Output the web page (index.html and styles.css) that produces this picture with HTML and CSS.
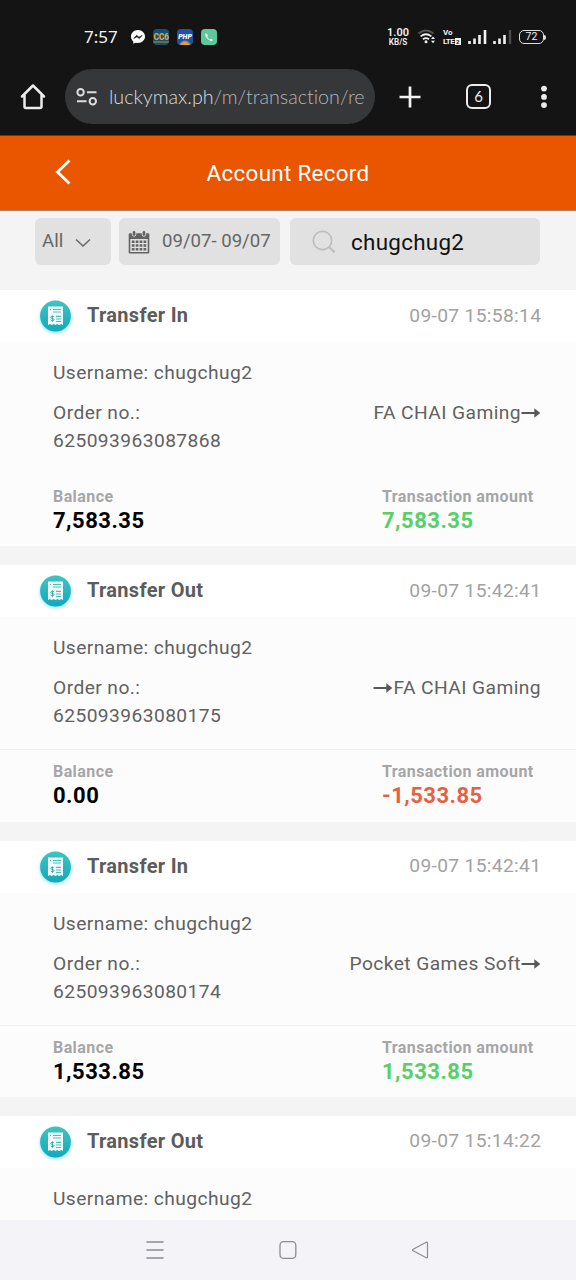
FILE: index.html
```html
<!DOCTYPE html>
<html lang="en">
<head>
<meta charset="utf-8">
<title>Account Record</title>
<link rel="stylesheet" href="styles.css">
</head>
<body>
<svg class="defs" width="0" height="0" aria-hidden="true">
  <defs>
    <linearGradient id="teal" x1="0" y1="0" x2="0" y2="1">
      <stop offset="0" stop-color="#3fc4c0"/><stop offset="1" stop-color="#10a9bd"/>
    </linearGradient>
    <radialGradient id="glow">
      <stop offset=".75" stop-color="#7fe0e6" stop-opacity=".7"/><stop offset="1" stop-color="#aeeef0" stop-opacity="0"/>
    </radialGradient>
    <symbol id="receipt" viewBox="0 0 40 40">
      <circle cx="20" cy="21.500" r="18.500" fill="url(#glow)"/>
      <circle cx="20" cy="20" r="15.400" fill="url(#teal)"/>
      <path d="M12.500 10.500h15v18.600l-1.900-1-1.900 1-1.900-1-1.800 1-1.900-1-1.900 1-1.800-1-1.900 1z" fill="#effcfb"/>
      <path d="M17.500 13.500h8M17.500 16h8M20.500 20.300h5M20.500 23h5M20.500 25.500h5M14.500 13.500h1" stroke="#4bbdc0" stroke-width="1.200"/>
      <path d="M18.400 20.900c-.6-.9-3.100-.8-3.100.5 0 1.500 3.200.8 3.200 2.300 0 1.300-2.600 1.300-3.300.2M16.900 19.300v6.500" fill="none" stroke="#3aa9ad" stroke-width="1"/>
    </symbol>
    <symbol id="arrow" viewBox="0 0 20 12">
      <path d="M.5 6h15" stroke="#585858" stroke-width="2" fill="none"/>
      <path d="M13.300 1.200 19.300 6l-6 4.800z" fill="#585858"/>
    </symbol>
  </defs>
</svg>
<div class="screen">
  <header class="status">
    <span class="clock">7:57</span>
    <svg class="messenger" width="16" height="16" viewBox="0 0 16 16"><path d="M8 1C3.900 1 1 3.900 1 7.600c0 2 .9 3.700 2.300 4.900v2.300l2.200-1.100c.8.2 1.600.3 2.500.3 4.100 0 7-2.800 7-6.400S12.100 1 8 1z" fill="#fff"/><path d="m3.800 9.500 2.800-3.200 2.400 1.900 3.200-1.900-2.900 3.300-2.300-1.800z" fill="#151515" stroke="#151515" stroke-width=".6"/></svg>
    <span class="app cc">CC6</span>
    <span class="app php">PHP</span>
    <span class="app phone"><svg width="16" height="16" viewBox="0 0 16 16"><path d="M5 4.200c-1.700 1.300.2 4.200 1.700 5.600s4.100 3.100 5.200 1.300l-2-1.500-1.100.9c-1-.5-2.400-1.900-2.700-2.900l.8-1.100z" fill="#fff"/></svg></span>
    <span class="spacer"></span>
    <span class="speed"><b>1.00</b><b class="unit">KB/S</b></span>
    <svg class="wifi" width="20" height="16" viewBox="0 0 20 16" fill="none"><path d="M1.500 4.500Q9 -1.500 16.500 4.500" stroke="#555" stroke-width="1.700"/><path d="M3.600 7.400Q9 3.200 14.400 7.400M6 10.300q3-2.300 6 0" stroke="#f2f2f2" stroke-width="1.800"/><circle cx="9" cy="12.700" r="1.500" fill="#f2f2f2"/><path d="m14 10 2-2.400 2 2.400zm0 1.800 2 2.400 2-2.400z" fill="#f2f2f2"/></svg>
    <span class="volte"><b>Vo</b><b class="lte">LTE<i>2</i></b></span>
    <svg class="sig1" width="19" height="16" viewBox="0 0 19 16"><path d="M1.500 15v-3M6.500 15v-5.500M11.500 15V6M17 15V1" stroke="#f2f2f2" stroke-width="2.600"/></svg>
    <svg class="sig2" width="19" height="16" viewBox="0 0 19 16"><path d="M1.500 15v-3M6.500 15v-5.500M11.500 15V6" stroke="#f2f2f2" stroke-width="2.600"/><path d="M17 15V1" stroke="#4a4a4a" stroke-width="2.400"/></svg>
    <span class="battery">72</span><span class="cap"></span>
  </header>

  <nav class="browser">
    <svg class="home" width="26" height="28" viewBox="0 0 26 28" fill="none" stroke="#ececec" stroke-width="2.500" stroke-linejoin="round" stroke-linecap="round"><path d="M2 13.500 13 2.500l11 11M4.500 12v11.500q0 1.500 1.500 1.500h14q1.500 0 1.500-1.500V12"/></svg>
    <div class="url">
      <svg width="22" height="18" viewBox="0 0 22 18" fill="none" stroke="#dedede" stroke-width="2"><circle cx="4.600" cy="4.300" r="3.200"/><path d="M11 4.300h9.500M1 13.300h9.500"/><circle cx="16.800" cy="13.300" r="3.200"/></svg>
      <span class="address">luckymax.ph<span class="path">/m/transaction/re</span></span>
    </div>
    <svg class="plus" width="22" height="22" viewBox="0 0 22 22"><path d="M11 .5v21M.5 11h21" stroke="#f2f2f2" stroke-width="2.700"/></svg>
    <span class="tabs">6</span>
    <svg class="dots" width="8" height="24" viewBox="0 0 8 24" fill="#ececec"><circle cx="4" cy="3.600" r="2.900"/><circle cx="4" cy="11.900" r="2.900"/><circle cx="4" cy="20.100" r="2.900"/></svg>
  </nav>

  <div class="titlebar">
    <svg class="back" width="18" height="28" viewBox="0 0 18 28"><path d="M15.500 2.500 3.500 14l12 11.500" fill="none" stroke="#fff" stroke-width="2.900"/></svg>
    <h1 class="title">Account Record</h1>
  </div>

  <div class="filters">
    <div class="filter all"><span>All</span><svg width="16" height="10" viewBox="0 0 16 10"><path d="m1 1.500 7 6.500 7-6.500" fill="none" stroke="#666" stroke-width="1.500"/></svg></div>
    <div class="filter date">
      <svg width="22" height="24" viewBox="0 0 22 24"><path d="M2 3.200h18q1.300 0 1.300 1.300v17.700q0 1.300-1.300 1.300H2Q.7 23.500.7 22.200V4.500Q.7 3.200 2 3.200z" fill="#636363"/><path d="M2.300 9h17.400v13H2.300z" fill="#e1e1e1"/><path d="M3.800 11.700h14.400M3.800 15.500h14.400M3.800 19.300h14.400" stroke="#636363" stroke-width="2.500" stroke-dasharray="2.700 1.200"/><rect x="4.300" y=".5" width="3.500" height="5.800" rx="1.700" fill="#636363" stroke="#e1e1e1" stroke-width=".9"/><rect x="14.200" y=".5" width="3.500" height="5.800" rx="1.700" fill="#636363" stroke="#e1e1e1" stroke-width=".9"/></svg>
      <span>09/07- 09/07</span>
    </div>
    <div class="filter search">
      <svg width="24" height="24" viewBox="0 0 24 24" fill="none" stroke="#bdbdbd"><circle cx="10.500" cy="10.500" r="9.200" stroke-width="1.700"/><path d="m17 17 5.500 5.200" stroke-width="2.200"/></svg>
      <span>chugchug2</span>
    </div>
  </div>

  <main class="records">
    <article class="card">
      <div class="head"><svg class="receipt"><use href="#receipt"/></svg><h2 class="kind">Transfer In</h2><time class="time">09-07 15:58:14</time></div>
      <div class="body">
        <p class="line">Username: chugchug2</p>
        <div class="order"><p class="line">Order no.:<br>625093963087868</p><p class="line route">FA CHAI Gaming<svg class="arrow"><use href="#arrow"/></svg></p></div>
      </div>
      <div class="foot plain"><div class="cell"><span class="label">Balance</span><span class="value">7,583.35</span></div><div class="cell amount"><span class="label">Transaction amount</span><span class="value in">7,583.35</span></div></div>
    </article>
    <article class="card">
      <div class="head"><svg class="receipt"><use href="#receipt"/></svg><h2 class="kind">Transfer Out</h2><time class="time">09-07 15:42:41</time></div>
      <div class="body">
        <p class="line">Username: chugchug2</p>
        <div class="order"><p class="line">Order no.:<br>625093963080175</p><p class="line route"><svg class="arrow"><use href="#arrow"/></svg>FA CHAI Gaming</p></div>
      </div>
      <div class="foot"><div class="cell"><span class="label">Balance</span><span class="value">0.00</span></div><div class="cell amount"><span class="label">Transaction amount</span><span class="value out">-1,533.85</span></div></div>
    </article>
    <article class="card">
      <div class="head"><svg class="receipt"><use href="#receipt"/></svg><h2 class="kind">Transfer In</h2><time class="time">09-07 15:42:41</time></div>
      <div class="body">
        <p class="line">Username: chugchug2</p>
        <div class="order"><p class="line">Order no.:<br>625093963080174</p><p class="line route">Pocket Games Soft<svg class="arrow"><use href="#arrow"/></svg></p></div>
      </div>
      <div class="foot"><div class="cell"><span class="label">Balance</span><span class="value">1,533.85</span></div><div class="cell amount"><span class="label">Transaction amount</span><span class="value in">1,533.85</span></div></div>
    </article>
    <article class="card">
      <div class="head"><svg class="receipt"><use href="#receipt"/></svg><h2 class="kind">Transfer Out</h2><time class="time">09-07 15:14:22</time></div>
      <div class="body"><p class="line">Username: chugchug2</p></div>
    </article>
  </main>

  <footer class="navkeys">
    <svg width="18" height="20" viewBox="0 0 18 20"><path d="M.5 2h17M.5 10h17M.5 18h17" stroke="#8c8b91" stroke-width="1.500"/></svg>
    <svg width="18" height="20" viewBox="0 0 18 20"><rect x="1" y="1.600" width="15.800" height="16.800" rx="3.600" fill="none" stroke="#8c8b91" stroke-width="1.300"/></svg>
    <svg width="18" height="20" viewBox="0 0 18 20"><path d="M15.200 2.200 2.200 9.200q-1.200.8 0 1.600l13 7q1.300.4 1.300-.8V3q0-1.200-1.300-.8z" fill="none" stroke="#8c8b91" stroke-width="1.200"/></svg>
  </footer>
</div>
</body>
</html>
```
FILE: styles.css
```css
* { box-sizing: border-box; }
body { margin: 0; font-family: Roboto, "Liberation Sans", sans-serif; }
h1, h2, p { margin: 0; font-weight: 400; }
svg { flex: none; display: block; }
.defs { position: absolute; }
.screen { width: 576px; height: 1280px; display: flex; flex-direction: column; overflow: hidden; background: #f4f4f4; }

.status { height: 60px; flex: none; padding: 14px 30px 0 84px; display: flex; align-items: center; background: #141414; color: #f2f2f2; }
.clock { width: 46px; font: 400 17px/44px "Noto Sans", sans-serif; padding-bottom: 1px; }
.spacer { flex: 1; }
.app { width: 16px; height: 16px; margin-left: 8px; border-radius: 4px; display: flex; justify-content: center; align-items: center; font-size: 8px; font-weight: 900; }
.cc { margin-left: 7px; background: linear-gradient(#17506f 75%, #6e6a4c 75% 88%, #17506f 88%); color: #d6a248; font-size: 8.500px; letter-spacing: -.3px; }
.php { background: radial-gradient(circle at 50% 110%, #e0a33c 0 22%, #204fa8 35%); color: #fff; font-size: 7px; font-style: italic; }
.phone { background: #5fc79c; }
.speed { width: 22px; margin-right: 8px; display: flex; flex-direction: column; align-items: center; font-size: 11px; line-height: 11px; }
.speed b { font-weight: 600; white-space: nowrap; }
.speed .unit { font-size: 8.200px; line-height: 9px; }
.wifi { margin-right: 6px; }
.volte { width: 18px; margin-right: 7px; display: flex; flex-direction: column; font-size: 8px; line-height: 9px; }
.volte b { white-space: nowrap; font-weight: 700; }
.lte { display: flex; align-items: center; letter-spacing: -.6px; }
.volte i { margin-left: 1px; padding: 0 1px; background: #f2f2f2; color: #141414; font-style: normal; font-size: 6px; line-height: 7px; letter-spacing: 0; }
.sig1 { margin-right: 6px; }
.sig2 { margin-right: 7px; }
.battery { width: 25px; height: 14px; border: 1.500px solid #ddd; border-radius: 5px; font-size: 10.500px; line-height: 12px; text-align: center; }
.cap { width: 2px; height: 5px; background: #ddd; border-radius: 0 2px 2px 0; }

.browser { height: 76px; flex: none; padding: 0 28px 2px 20px; display: flex; align-items: center; background: #141414; border-bottom: 1px solid #5b3a22; }
.home { margin-top: 1px; }
.url { width: 310px; height: 55px; margin-left: 19px; padding: 0 10px 0 11px; border-radius: 28px; display: flex; align-items: center; background: #353739; overflow: hidden; }
.address { margin-left: 11px; font: 300 19.700px/30px Lato, sans-serif; font-variant-ligatures: none; color: #dcdcdc; white-space: nowrap; padding-top: 1px; }
.path { color: #b3b5b6; }
.plus { margin-left: 24px; }
.tabs { width: 25px; height: 25px; margin-left: 45px; border: 2.500px solid #ececec; border-radius: 6px; color: #ececec; font: 15px/21px Lato, sans-serif; text-align: center; }
.dots { margin-left: 49px; }

.titlebar { height: 75px; flex: none; padding: 0 56px 2px 54px; display: flex; align-items: center; background: #ea5500; border-bottom: 1px solid #a87e6c; }
.title { flex: 1; margin-right: 16px; padding-top: 1px; font-size: 22.400px; letter-spacing: .3px; text-align: center; color: #fff; }

.filters { height: 79px; flex: none; padding: 7px 36px 25px 35px; display: flex; }
.filter { height: 47px; border-radius: 6px; background: #e1e1e1; display: flex; align-items: center; font-size: 18.600px; color: #666; white-space: nowrap; }
.filter span { padding-bottom: 1px; }
.all { width: 76px; padding-left: 7px; gap: 12px; }
.all svg { margin-top: 3px; }
.date { width: 161px; margin-left: 8px; padding-left: 9px; gap: 12px; }
.search { flex: 1; margin-left: 10px; padding-left: 22px; gap: 15px; font-size: 22.400px; letter-spacing: .3px; color: #111; }
.search span { padding: 0; }

.records { flex: 1; min-height: 0; overflow: hidden; }
.card { height: 256.300px; margin-bottom: 19px; background: #fcfcfc; }
.head { height: 52px; padding: 6px 35px 6px 35px; display: flex; align-items: center; background: #fff; }
.receipt { width: 41px; height: 40px; }
.kind { margin-left: 11px; flex: 1; font-size: 20px; letter-spacing: .3px; font-weight: 700; color: #5c5c5c; line-height: 38px; padding-bottom: 2px; }
.time { font-size: 19.200px; letter-spacing: .35px; margin-right: -.35px; color: #a2a2a2; padding-bottom: 2px; }
.body { height: 132px; padding: 17px 35px 0 53px; }
.line { font-size: 19.200px; letter-spacing: .43px; line-height: 28px; color: #616161; white-space: nowrap; }
.order { margin-top: 12px; display: flex; justify-content: space-between; }
.route { display: flex; align-items: flex-start; }
.arrow { width: 20px; height: 12px; margin-top: 8px; }
.foot { height: 72px; padding: 11px 0 0 53px; display: flex; border-top: 1px solid #efefef; }
.plain { border-top-color: transparent; }
.cell { width: 329px; display: flex; flex-direction: column; }
.amount { width: 194px; }
.label { font-size: 16px; letter-spacing: .42px; line-height: 21px; font-weight: 700; color: #a6a6a6; }
.value { font-size: 22px; letter-spacing: .5px; line-height: 28px; font-weight: 700; color: #000; }
.in { color: #57d068; }
.out { color: #e85f43; }

.navkeys { height: 60px; flex: none; padding: 0 147px 0 146px; display: flex; align-items: center; justify-content: space-between; background: #f4f3f8; }
```
